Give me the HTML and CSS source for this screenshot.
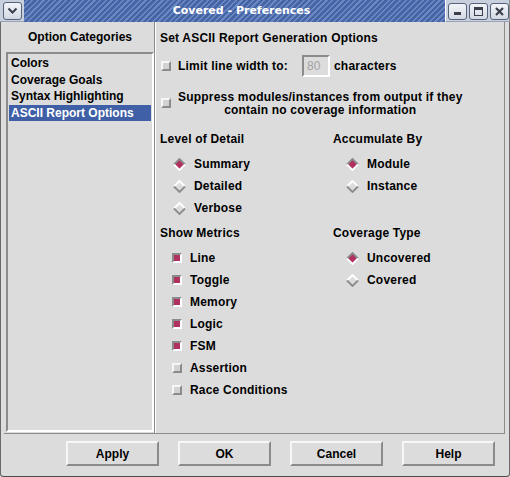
FILE: index.html
```html
<!DOCTYPE html>
<html>
<head>
<meta charset="utf-8">
<link rel="stylesheet" href="styles.css">
</head>
<body>
<div class="win">
  <div class="titlebar">
    <div class="tgroup">
      <div class="tbtn"><svg width="11" height="8" viewBox="0 0 11 8"><polyline points="1.5,1.5 5.5,5.5 9.5,1.5" fill="none" stroke="#3a3f4a" stroke-width="2"/></svg></div>
    </div>
    <div class="title">Covered - Preferences</div>
    <div class="tgroup right">
      <div class="tbtn"><svg width="11" height="11" viewBox="0 0 11 11"><rect x="2" y="6" width="7" height="3" fill="#3a3f4a"/></svg></div>
      <div class="tbtn"><svg width="11" height="11" viewBox="0 0 11 11"><rect x="1.5" y="1.5" width="8" height="8" fill="none" stroke="#3a3f4a" stroke-width="1"/><rect x="1" y="1" width="9" height="3" fill="#3a3f4a"/></svg></div>
      <div class="tbtn"><svg width="11" height="11" viewBox="0 0 11 11"><path d="M2 2 L9 9 M9 2 L2 9" stroke="#3a3f4a" stroke-width="2.2"/></svg></div>
    </div>
  </div>
  <div class="panes">
    <div class="left">
      <div class="ltitle">Option Categories</div>
      <div class="list">
        <div class="item">Colors</div>
        <div class="item">Coverage Goals</div>
        <div class="item">Syntax Highlighting</div>
        <div class="item sel">ASCII Report Options</div>
      </div>
    </div>
    <div class="right">
      <div class="rtitle">Set ASCII Report Generation Options</div>
      <div class="row limit">
        <span class="cb"></span>
        <span class="lbl">Limit line width to:</span>
        <span class="entry">80</span>
        <span>characters</span>
      </div>
      <div class="row suppress">
        <span class="cb"></span>
        <span class="two">Suppress modules/instances from output if they<br>contain no coverage information</span>
      </div>
      <div class="grid">
        <div class="sec">
          <div class="head">Level of Detail</div>
          <div class="opt radio"><svg class="rd" width="13" height="13" viewBox="0 0 13 13"><polygon points="6.5,1 12,6.5 6.5,12 1,6.5" fill="#b03060"/><polyline points="1,6.5 6.5,1 12,6.5" fill="none" stroke="#8b8b8b" stroke-width="1.8"/><polyline points="1,6.5 6.5,12 12,6.5" fill="none" stroke="#fff" stroke-width="1.8"/></svg>Summary</div>
          <div class="opt radio"><svg class="rd" width="13" height="13" viewBox="0 0 13 13"><polygon points="6.5,1 12,6.5 6.5,12 1,6.5" fill="#dcdcdc"/><polyline points="1,6.5 6.5,1 12,6.5" fill="none" stroke="#fff" stroke-width="1.8"/><polyline points="1,6.5 6.5,12 12,6.5" fill="none" stroke="#8b8b8b" stroke-width="1.8"/></svg>Detailed</div>
          <div class="opt radio"><svg class="rd" width="13" height="13" viewBox="0 0 13 13"><polygon points="6.5,1 12,6.5 6.5,12 1,6.5" fill="#dcdcdc"/><polyline points="1,6.5 6.5,1 12,6.5" fill="none" stroke="#fff" stroke-width="1.8"/><polyline points="1,6.5 6.5,12 12,6.5" fill="none" stroke="#8b8b8b" stroke-width="1.8"/></svg>Verbose</div>
        </div>
        <div class="sec">
          <div class="head">Accumulate By</div>
          <div class="opt radio"><svg class="rd" width="13" height="13" viewBox="0 0 13 13"><polygon points="6.5,1 12,6.5 6.5,12 1,6.5" fill="#b03060"/><polyline points="1,6.5 6.5,1 12,6.5" fill="none" stroke="#8b8b8b" stroke-width="1.8"/><polyline points="1,6.5 6.5,12 12,6.5" fill="none" stroke="#fff" stroke-width="1.8"/></svg>Module</div>
          <div class="opt radio"><svg class="rd" width="13" height="13" viewBox="0 0 13 13"><polygon points="6.5,1 12,6.5 6.5,12 1,6.5" fill="#dcdcdc"/><polyline points="1,6.5 6.5,1 12,6.5" fill="none" stroke="#fff" stroke-width="1.8"/><polyline points="1,6.5 6.5,12 12,6.5" fill="none" stroke="#8b8b8b" stroke-width="1.8"/></svg>Instance</div>
        </div>
        <div class="sec">
          <div class="head">Show Metrics</div>
          <div class="opt check"><span class="cb on"></span>Line</div>
          <div class="opt check"><span class="cb on"></span>Toggle</div>
          <div class="opt check"><span class="cb on"></span>Memory</div>
          <div class="opt check"><span class="cb on"></span>Logic</div>
          <div class="opt check"><span class="cb on"></span>FSM</div>
          <div class="opt check"><span class="cb"></span>Assertion</div>
          <div class="opt check"><span class="cb"></span>Race Conditions</div>
        </div>
        <div class="sec">
          <div class="head">Coverage Type</div>
          <div class="opt radio"><svg class="rd" width="13" height="13" viewBox="0 0 13 13"><polygon points="6.5,1 12,6.5 6.5,12 1,6.5" fill="#b03060"/><polyline points="1,6.5 6.5,1 12,6.5" fill="none" stroke="#8b8b8b" stroke-width="1.8"/><polyline points="1,6.5 6.5,12 12,6.5" fill="none" stroke="#fff" stroke-width="1.8"/></svg>Uncovered</div>
          <div class="opt radio"><svg class="rd" width="13" height="13" viewBox="0 0 13 13"><polygon points="6.5,1 12,6.5 6.5,12 1,6.5" fill="#dcdcdc"/><polyline points="1,6.5 6.5,1 12,6.5" fill="none" stroke="#fff" stroke-width="1.8"/><polyline points="1,6.5 6.5,12 12,6.5" fill="none" stroke="#8b8b8b" stroke-width="1.8"/></svg>Covered</div>
        </div>
      </div>
    </div>
  </div>
  <div class="buttons">
    <div class="btn">Apply</div>
    <div class="btn">OK</div>
    <div class="btn">Cancel</div>
    <div class="btn">Help</div>
  </div>
</div>
</body>
</html>
```

FILE: styles.css
```css
* { box-sizing: border-box; }
html, body { margin: 0; padding: 0; background: #dcdcdc; }
body {
  font: bold 12px "Liberation Sans", Arial, sans-serif;
  color: #000;
}
.win {
  width: 510px;
  height: 477px;
  display: flex;
  flex-direction: column;
  background: #dcdcdc;
  box-shadow: inset 1px 0 #6a6a6a, inset -1px 0 #6a6a6a, inset 0 -1px #4a4a4a;
  border-radius: 0 0 4px 4px;
  overflow: hidden;
}
.titlebar {
  width: 510px;
  height: 22px;
  flex: none;
  display: flex;
  align-items: stretch;
  background: repeating-linear-gradient(135deg, #4565a7 0 2.4px, #6c88c2 2.4px 4px);
}
.tgroup {
  flex: none;
  width: 24px;
  display: flex;
  gap: 2px;
  padding: 2px 2px 1px 3px;
  background: #c9d0dd;
  border-bottom: 1px solid #9aa4b8;
}
.tgroup.right {
  width: 65px;
  padding: 3px 2px 1px 2px;
}
.tbtn {
  width: 19px;
  height: 18px;
  flex: none;
  border: 1px solid #56627a;
  border-radius: 3px;
  background: linear-gradient(#f2f4f8, #d3d9e4);
  display: flex;
  align-items: center;
  justify-content: center;
}
.tgroup.right .tbtn { height: 17px; }
.title {
  flex: none;
  width: 421px;
  text-align: center;
  color: #fff;
  font: bold 11px "DejaVu Sans", sans-serif;
  line-height: 22px;
  padding-left: 14px;
}
.panes {
  height: 412px;
  flex: none;
  display: flex;
  margin: 0 5px 0 4px;
  border-bottom: 1px solid #8b8b8b;
}
.left {
  width: 151px;
  flex: none;
  border-right: 1px solid #8b8b8b;
}
.ltitle {
  height: 30px;
  line-height: 30px;
  text-align: center;
  padding-left: 2px;
}
.list {
  margin-left: 2px;
  width: 148px;
  height: 380px;
  border: 2px solid;
  border-color: #8b8b8b #fff #fff #8b8b8b;
  padding: 1px;
}
.item {
  line-height: 16.5px;
  height: 16.5px;
  padding-left: 2px;
  white-space: nowrap;
}
.item.sel {
  background: #3f5fa6;
  color: #fff;
}
.right {
  flex: 1;
  border-left: 1px solid #fff;
  border-right: 1px solid #8b8b8b;
  padding-left: 4px;
  letter-spacing: 0.2px;
}
.rtitle {
  height: 33px;
  line-height: 32px;
}
.row {
  display: flex;
  align-items: center;
}
.limit { height: 22px; }
.cb {
  width: 10px;
  height: 10px;
  flex: none;
  border: 2px solid;
  border-color: #f6f6f6 #8b8b8b #8b8b8b #f6f6f6;
  background: #d2d2d2;
}
.cb.on {
  border-color: #8b8b8b #fff #fff #8b8b8b;
  background: #b03060;
}
.limit .cb, .suppress .cb { margin-left: 1px; margin-right: 7px; }
.lbl { width: 124px; }
.entry {
  width: 28px;
  height: 22px;
  border: 2px solid;
  border-color: #8b8b8b #fff #fff #8b8b8b;
  color: #a3a3a3;
  font-weight: normal;
  line-height: 18px;
  padding-left: 3px;
  margin-right: 4px;
}
.suppress {
  height: 26px;
  margin-top: 13px;
}
.two {
  display: inline-block;
  text-align: center;
  line-height: 13px;
  padding-top: 1px;
}
.grid {
  margin-top: 12px;
  display: grid;
  grid-template-columns: 173px 1fr;
  row-gap: 3px;
}
.head {
  height: 22px;
  line-height: 22px;
  margin-bottom: 3px;
}
.opt {
  height: 22px;
  display: flex;
  align-items: center;
}
.radio { padding-left: 13px; }
.rd { margin-right: 8px; flex: none; }
.check { padding-left: 12px; }
.check .cb { margin-right: 8px; }
.buttons {
  height: 37px;
  flex: none;
  display: flex;
  gap: 19px;
  padding: 7px 0 0 66px;
}
.btn {
  width: 93px;
  height: 25px;
  flex: none;
  border: 2px solid;
  border-color: #f6f6f6 #8b8b8b #8b8b8b #f6f6f6;
  text-align: center;
  line-height: 22px;
}
```
